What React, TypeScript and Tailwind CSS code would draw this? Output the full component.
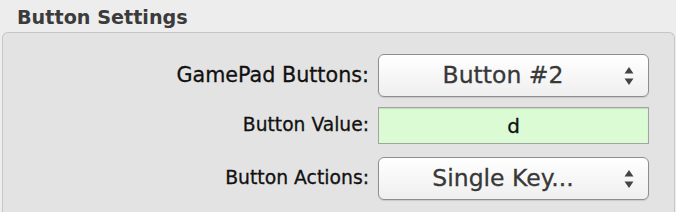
import React from 'react';

const font = { fontFamily: '"DejaVu Sans", Verdana, sans-serif' };

const Arrows = () => (
  <svg width="12" height="22" viewBox="0 0 12 22" className="shrink-0">
    <path d="M6 2 L10.5 8.5 L1.5 8.5 Z" fill="#444" />
    <path d="M6 20 L10.5 13.5 L1.5 13.5 Z" fill="#444" />
  </svg>
);

const PopUp: React.FC<{ value: string }> = ({ value }) => (
  <div className="flex h-[43px] items-center rounded-[6px] border border-[#8e8e8e] bg-gradient-to-b from-[#ffffff] to-[#efefef] pr-[13px] shadow-[0_1px_1px_rgba(0,0,0,0.12)]">
    <span className="flex-1 pl-[4px] text-center text-[23.5px] leading-none text-[#383838] [-webkit-text-stroke:0.3px_#383838]">
      {value}
    </span>
    <Arrows />
  </div>
);

export default function App() {
  return (
    <div className="h-[212px] w-[676px] overflow-hidden bg-[#ededed]" style={font}>
      <div className="flex h-[32px] items-start pl-[17px] pt-[8px]">
        <span className="text-[19.2px] font-bold leading-none text-[#3b3b3b]">Button Settings</span>
      </div>
      <div className="ml-[2px] mr-[1px] h-[190px] rounded-tl-[6px] rounded-tr-[6px] border-l border-r border-t border-[#c6c6c6] bg-[#e3e3e3] pr-[25px] pt-[21px]">
        <div className="grid grid-cols-[1fr_271px] items-center gap-x-[9px]">
          <span className="text-right text-[20.7px] leading-none text-[#111] [-webkit-text-stroke:0.3px_#111]">
            GamePad Buttons:
          </span>
          <PopUp value="Button #2" />

          <span className="mt-[10px] text-right text-[18.7px] leading-none text-[#111] [-webkit-text-stroke:0.3px_#111]">
            Button Value:
          </span>
          <div className="mt-[10px] flex h-[37px] items-center justify-center border border-[#a3a3a3] bg-[#dbfbd5] shadow-[inset_0_1px_1px_rgba(0,0,0,0.12)]">
            <span className="text-[20px] leading-none text-[#111] [-webkit-text-stroke:0.3px_#111]">d</span>
          </div>

          <span className="mt-[13px] text-right text-[18.8px] leading-none text-[#111] [-webkit-text-stroke:0.3px_#111]">
            Button Actions:
          </span>
          <div className="mt-[13px]">
            <PopUp value="Single Key..." />
          </div>
        </div>
      </div>
    </div>
  );
}
